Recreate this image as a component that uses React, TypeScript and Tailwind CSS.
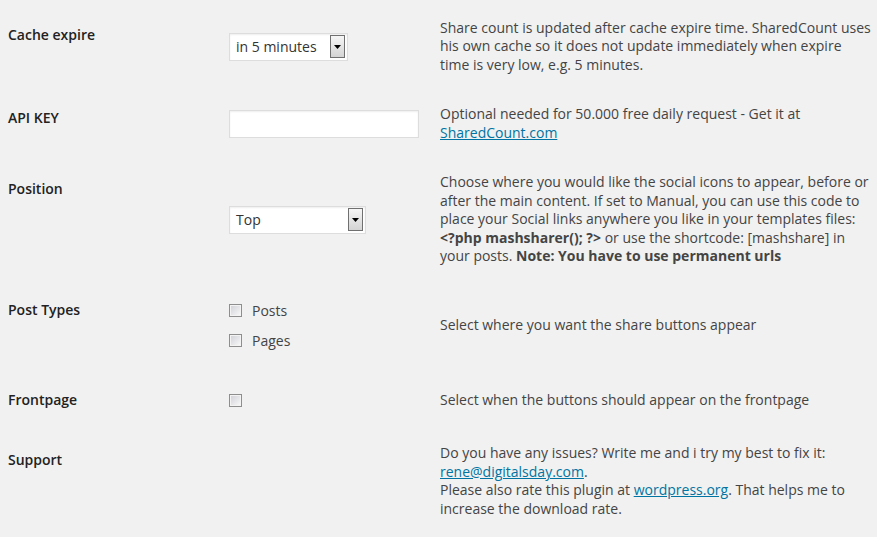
import React from "react";

function Label({ children }: { children: React.ReactNode }) {
  return (
    <div className="w-[221px] shrink-0 self-start pt-[21px] text-[14px] leading-[18px] font-semibold text-[#222]">
      {children}
    </div>
  );
}

function Arrow() {
  return (
    <div className="flex h-[23px] w-[15px] items-center justify-center border border-[#707070] bg-gradient-to-b from-[#f6f6f6] to-[#d4d4d4]">
      <svg width="7" height="4" viewBox="0 0 7 4">
        <path d="M0 0 L7 0 L3.5 4 Z" fill="#000" />
      </svg>
    </div>
  );
}

function Select({ value, width }: { value: string; width: string }) {
  return (
    <div
      className={`flex h-[28px] ${width} items-center justify-between border border-[#ddd] bg-white pl-[6px] pr-[2px] text-[14px] text-[#333] shadow-[inset_0_1px_2px_rgba(0,0,0,0.07)]`}
    >
      <span>{value}</span>
      <Arrow />
    </div>
  );
}

function Checkbox() {
  return (
    <div className="h-[13px] w-[13px] shrink-0 border border-[#8e8e8e] bg-gradient-to-br from-[#cfd0d6] to-[#fafafa] shadow-[inset_0_0_0_1px_#f3f3f3]" />
  );
}

function Link({ children }: { children: React.ReactNode }) {
  return <a className="text-[#0074a2] underline">{children}</a>;
}

function Row({
  h,
  label,
  control,
  desc,
}: {
  h: string;
  label: string;
  control: React.ReactNode;
  desc: React.ReactNode;
}) {
  return (
    <div className={`flex ${h}`}>
      <Label>{label}</Label>
      <div className="flex w-[211px] shrink-0 items-center">{control}</div>
      <div className="flex w-[437px] shrink-0 items-center whitespace-nowrap text-[14px] leading-[18.5px] text-[#444]">
        <div>{desc}</div>
      </div>
    </div>
  );
}

export default function App() {
  return (
    <div
      className="min-h-[537px] w-[877px] overflow-hidden bg-[#f1f1f1] pl-[8px] pt-[5px]"
      style={{ fontFamily: '"Open Sans", sans-serif' }}
    >
      <Row
        h="h-[83px]"
        label="Cache expire"
        control={<Select value="in 5 minutes" width="w-[119px]" />}
        desc={
          <>
            Share count is updated after cache expire time. SharedCount uses
            <br />
            his own cache so it does not update immediately when expire
            <br />
            time is very low, e.g. 5 minutes.
          </>
        }
      />
      <Row
        h="h-[71px]"
        label="API KEY"
        control={
          <div className="h-[28px] w-[190px] border border-[#ddd] bg-white shadow-[inset_0_1px_2px_rgba(0,0,0,0.07)]" />
        }
        desc={
          <>
            Optional needed for 50.000 free daily request - Get it at
            <br />
            <Link>SharedCount.com</Link>
          </>
        }
      />
      <Row
        h="h-[121px]"
        label="Position"
        control={<Select value="Top" width="w-[137px]" />}
        desc={
          <>
            Choose where you would like the social icons to appear, before or
            <br />
            after the main content. If set to Manual, you can use this code to
            <br />
            place your Social links anywhere you like in your templates files:
            <br />
            <b className="font-bold">&lt;?php mashsharer(); ?&gt;</b> or use the shortcode: [mashshare] in
            <br />
            your posts. <b className="font-bold">Note: You have to use permanent urls</b>
          </>
        }
      />
      <Row
        h="h-[90px]"
        label="Post Types"
        control={
          <div className="flex flex-col gap-[11px] text-[14px] leading-[19px] text-[#444]">
            <div className="flex items-center gap-[10px]">
              <Checkbox />
              <span>Posts</span>
            </div>
            <div className="flex items-center gap-[10px]">
              <Checkbox />
              <span>Pages</span>
            </div>
          </div>
        }
        desc={<>Select where you want the share buttons appear</>}
      />
      <Row
        h="h-[60px]"
        label="Frontpage"
        control={<Checkbox />}
        desc={<>Select when the buttons should appear on the frontpage</>}
      />
      <Row
        h="h-[102px]"
        label="Support"
        control={null}
        desc={
          <>
            Do you have any issues? Write me and i try my best to fix it:
            <br />
            <Link>rene@digitalsday.com</Link>.
            <br />
            Please also rate this plugin at <Link>wordpress.org</Link>. That helps me to
            <br />
            increase the download rate.
          </>
        }
      />
    </div>
  );
}
